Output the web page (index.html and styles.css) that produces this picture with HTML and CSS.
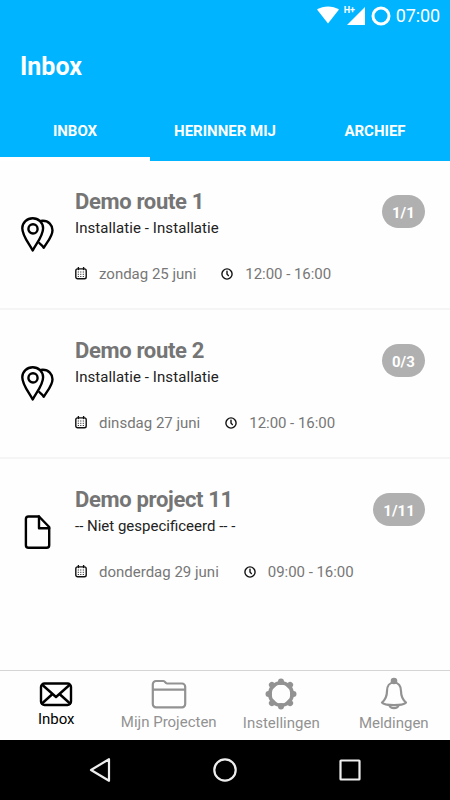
FILE: index.html
```html
<!DOCTYPE html>
<html lang="nl">
<head>
  <meta charset="UTF-8" />
  <meta name="viewport" content="width=device-width, initial-scale=1.0" />
  <title>Inbox</title>
  <link rel="stylesheet" href="styles.css">
</head>
<body>
  <!-- shared icons -->
  <svg class="defs" aria-hidden="true">
    <symbol id="pins" viewBox="0 0 34 36">
      <path d="M12.700 2.200C7 2.200 2.300 6.600 2.300 12.200c0 7.800 6.700 15 10.400 22.300 3.700-7.300 10.400-14.500 10.400-22.300C23.100 6.600 18.400 2.200 12.700 2.200z" />
      <circle cx="13" cy="12.900" r="4.600" />
      <path d="M20.800 5c.8-.2 1.400-.2 2-.2 5.800 0 9.700 4.300 9.700 9.400 0 6.300-5.700 12.100-8.700 17.600-1.200-2-2.800-3-4.500-4.800" />
    </symbol>
    <symbol id="calendar" viewBox="0 0 12 13">
      <rect x=".8" y="1.900" width="10.400" height="9.900" rx="1.800" />
      <path d="M3.400 .5v2M8.600 .5v2" />
      <path class="dots" d="M2.800 5h7M2.800 7.300h7M2.800 9.500h7" />
    </symbol>
    <symbol id="clock" viewBox="0 0 12 12">
      <circle cx="6" cy="6" r="5.100" />
      <path d="M6 3.200V6l1.400 1.600" />
    </symbol>
  </svg>

  <header class="header">
    <div class="status">
      <svg class="wifi" width="24" height="18" viewBox="0 0 24 18"><path d="M1 3.600C7.500-.7 16.500-.7 23 3.600L12 17.500z" /></svg>
      <span class="network">H+</span>
      <svg class="signal" width="18" height="18" viewBox="0 0 18 18"><path d="M18 0v18H0z" /></svg>
      <svg class="ring" width="20" height="20" viewBox="0 0 20 20"><circle cx="10" cy="10" r="8" /></svg>
      <span class="time">07:00</span>
    </div>
    <h1>Inbox</h1>
    <nav class="tabs">
      <a class="tab active">INBOX</a>
      <a class="tab">HERINNER MIJ</a>
      <a class="tab">ARCHIEF</a>
    </nav>
  </header>

  <main class="list">
    <article class="item">
      <svg class="item-icon" width="34" height="36"><use href="#pins" /></svg>
      <div class="item-text">
        <h2>Demo route 1</h2>
        <p>Installatie - Installatie</p>
        <div class="meta">
          <svg class="small-icon" width="12" height="13"><use href="#calendar" /></svg>
          <span class="date">zondag 25 juni</span>
          <svg class="small-icon" width="12" height="12"><use href="#clock" /></svg>
          <span>12:00 - 16:00</span>
        </div>
      </div>
      <span class="count">1/1</span>
    </article>

    <article class="item">
      <svg class="item-icon" width="34" height="36"><use href="#pins" /></svg>
      <div class="item-text">
        <h2>Demo route 2</h2>
        <p>Installatie - Installatie</p>
        <div class="meta">
          <svg class="small-icon" width="12" height="13"><use href="#calendar" /></svg>
          <span class="date">dinsdag 27 juni</span>
          <svg class="small-icon" width="12" height="12"><use href="#clock" /></svg>
          <span>12:00 - 16:00</span>
        </div>
      </div>
      <span class="count">0/3</span>
    </article>

    <article class="item">
      <svg class="item-icon" width="34" height="36" viewBox="0 0 34 36">
        <path d="M8.500 2.500H19L29.200 13v18.200a2.600 2.600 0 0 1-2.600 2.600H8.500a2.600 2.600 0 0 1-2.600-2.600V5.100a2.600 2.600 0 0 1 2.600-2.600z" />
        <path d="M19 2.500V14.200h10.200" />
      </svg>
      <div class="item-text">
        <h2>Demo project 11</h2>
        <p class="tight">-- Niet gespecificeerd -- -</p>
        <div class="meta">
          <svg class="small-icon" width="12" height="13"><use href="#calendar" /></svg>
          <span class="date">donderdag 29 juni</span>
          <svg class="small-icon" width="12" height="12"><use href="#clock" /></svg>
          <span>09:00 - 16:00</span>
        </div>
      </div>
      <span class="count">1/11</span>
    </article>
  </main>

  <nav class="bottom">
    <a class="bottom-item inbox">
      <svg width="34" height="26" viewBox="0 0 34 26">
        <rect x="2" y="2.500" width="30" height="21.500" rx="3.500" />
        <path d="M3.500 4l13.500 12L30.500 4M3 22.500l10.500-9.500M31 22.500L20.500 13" />
      </svg>
      <span>Inbox</span>
    </a>
    <a class="bottom-item projects">
      <svg width="36" height="30" viewBox="0 0 36 30">
        <path d="M5 2h7.500c1.800 0 1.500 2.500 3.500 2.500h15a3.200 3.200 0 0 1 3.200 3.200v17.400a3.200 3.200 0 0 1-3.200 3.200H5a3.200 3.200 0 0 1-3.200-3.200V5.200A3.200 3.200 0 0 1 5 2zM2 10.600h32" />
      </svg>
      <span>Mijn Projecten</span>
    </a>
    <a class="bottom-item settings">
      <svg width="32" height="32" viewBox="0 0 32 32">
        <circle class="wheel" cx="16" cy="16" r="11.200" />
        <path class="teeth" d="M16 3.500v.5M16 28v.5M3.500 16h.5M28 16h.5M6.900 6.900l.6.6M24.500 24.500l.6.6M6.900 25.100l.6-.6M24.500 7.500l.6-.6" />
      </svg>
      <span>Instellingen</span>
    </a>
    <a class="bottom-item alerts">
      <svg width="28" height="33" viewBox="0 0 28 33">
        <circle class="knob" cx="14" cy="4" r="3.300" />
        <path d="M14 5.500c-4.500 0-7 3.500-7 8.500 0 6-1.500 8.500-5 11.500 1.500 2 6.500 2.700 12 2.700s10.500-.7 12-2.700c-3.500-3-5-5.500-5-11.500 0-5-2.500-8.500-7-8.500z" />
        <path d="M9.500 28.200c1 4 8 4 9 0" />
      </svg>
      <span>Meldingen</span>
    </a>
  </nav>

  <footer class="android">
    <svg width="26" height="26" viewBox="0 0 26 26"><path d="M22 2.200v21.600L4 13z" /></svg>
    <svg width="26" height="26" viewBox="0 0 26 26"><circle cx="13" cy="13" r="10.700" /></svg>
    <svg width="26" height="26" viewBox="0 0 26 26"><rect x="3.500" y="3.500" width="19" height="19" rx=".5" /></svg>
  </footer>
</body>
</html>
```
FILE: styles.css
```css
* {
  box-sizing: border-box;
}
body {
  margin: 0;
  height: 800px;
  display: flex;
  flex-direction: column;
  background-color: #fefefe;
  font-family: Roboto, sans-serif;
  overflow: hidden;
}
svg {
  display: block;
  flex: none;
  fill: none;
  stroke: currentColor;
  stroke-width: 2.2;
  stroke-linecap: round;
  stroke-linejoin: round;
}
h1, h2, p {
  margin: 0;
}
.defs {
  display: none;
}

/* header */
.header {
  height: 161px;
  background-color: #00b4ff;
  color: white;
}
.status {
  height: 32px;
  padding-right: 10px;
  display: flex;
  justify-content: flex-end;
  align-items: center;
}
.wifi, .signal {
  fill: white;
  stroke: none;
}
.wifi {
  margin-top: -2px;
}
.network {
  width: 11px;
  margin: -12px -8px 0 4px;
  font-size: 9px;
  font-weight: bold;
  line-height: 10px;
}
.signal {
  margin-top: -1px;
  margin-right: 6px;
}
.ring {
  margin-top: -1px;
  stroke-width: 3;
}
.time {
  margin-left: 5px;
  font-size: 18px;
  line-height: 20px;
  letter-spacing: -.1px;
}
h1 {
  height: 68px;
  padding: 0 20px;
  font-size: 25px;
  line-height: 69px;
}
.tabs {
  display: flex;
  height: 61px;
}
.tab {
  flex: 1;
  padding-top: 5px;
  border-bottom: 4px solid transparent;
  text-align: center;
  font-size: 15px;
  font-weight: bold;
  line-height: 52px;
}
.tab.active {
  border-color: white;
}

/* list */
.list {
  height: 509px;
}
.item {
  display: flex;
  height: 149px;
  padding: 27px 25px 0 20px;
  border-bottom: 2px solid #f5f5f5;
}
.item:last-child {
  border: none;
}
.item-icon {
  margin-top: 28px;
  stroke-width: 2.4;
}
.item-text {
  flex: 1;
  margin-left: 21px;
}
h2 {
  font-size: 22px;
  letter-spacing: -.33px;
  line-height: 28px;
  color: #757575;
}
p {
  padding-top: 2px;
  font-size: 15px;
  letter-spacing: .08px;
  line-height: 20px;
  color: #222;
}
.tight {
  letter-spacing: 0;
}
.meta {
  display: flex;
  align-items: center;
  margin-top: 25px;
  font-size: 15px;
  line-height: 20px;
  color: #777;
}
.meta span {
  margin-left: 12px;
  padding-top: 1px;
  letter-spacing: -.04px;
}
.meta .date {
  margin-right: 25px;
  letter-spacing: 0;
}
.small-icon {
  color: #111;
  stroke-width: 1.4;
}
.dots {
  stroke-width: 1;
  stroke-dasharray: 1 1.500;
  stroke-linecap: butt;
}
.count {
  height: 33px;
  margin-top: 7px;
  padding: 0 10px;
  border-radius: 17px;
  background-color: #b0b0b0;
  color: white;
  font-size: 15px;
  font-weight: bold;
  letter-spacing: .1px;
  line-height: 36px;
}

/* bottom bar */
.bottom {
  display: flex;
  height: 70px;
  border-top: 1px solid #d5d5d5;
}
.bottom-item {
  flex: 1;
  display: flex;
  flex-direction: column;
  align-items: center;
  color: #929292;
  font-size: 15px;
  line-height: 20px;
  white-space: nowrap;
}
.inbox {
  padding-top: 10px;
  color: black;
}
.inbox svg {
  stroke-width: 2.4;
}
.inbox span {
  margin-top: 2px;
}
.projects {
  padding-top: 8px;
}
.projects span {
  margin-top: 3px;
}
.settings {
  padding-top: 7px;
}
.settings span {
  margin-top: 3px;
}
.alerts {
  padding-top: 6px;
}
.alerts span {
  margin-top: 3px;
}
.wheel {
  stroke-width: 3.6;
}
.teeth {
  stroke-width: 6;
}
.knob {
  fill: currentColor;
  stroke: none;
}

/* system buttons */
.android {
  display: flex;
  justify-content: center;
  align-items: center;
  gap: 99px;
  height: 60px;
  background-color: black;
  color: #eee;
}
```
